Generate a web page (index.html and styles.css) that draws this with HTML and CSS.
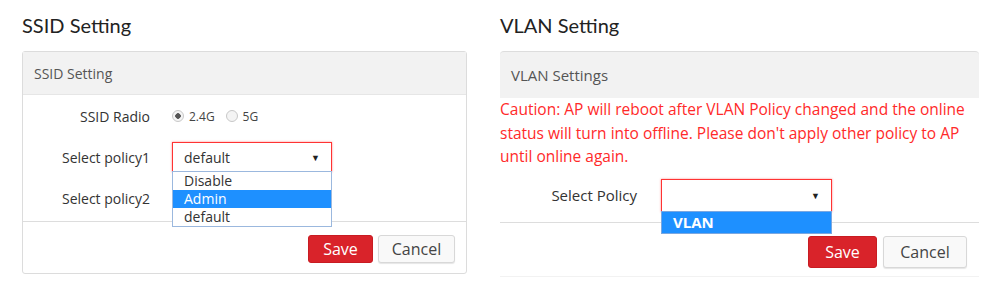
FILE: index.html
```html
<!DOCTYPE html>
<html lang="en">
<head>
  <meta charset="UTF-8">
  <title>SSID / VLAN Setting</title>
  <link rel="stylesheet" href="styles.css">
</head>
<body>

  <div class="col col-ssid">
    <h2 class="title">SSID Setting</h2>

    <div class="panel panel-ssid">
      <div class="panel-head">SSID Setting</div>

      <div class="panel-body">
        <div class="form-row">
          <label>SSID Radio</label>
          <div class="radios">
            <input type="radio" name="radio" checked><span>2.4G</span>
            <input type="radio" name="radio"><span>5G</span>
          </div>
        </div>

        <div class="form-row">
          <label>Select policy1</label>
          <div class="select">
            <span>default</span>
            <i class="arrow">&#9660;</i>
            <ul class="options">
              <li>Disable</li>
              <li class="active">Admin</li>
              <li>default</li>
            </ul>
          </div>
        </div>

        <div class="form-row">
          <label>Select policy2</label>
          <div></div>
        </div>
      </div>

      <div class="panel-foot">
        <button class="btn btn-save">Save</button>
        <button class="btn btn-cancel">Cancel</button>
      </div>
    </div>
  </div>

  <div class="col col-vlan">
    <h2 class="title">VLAN Setting</h2>

    <div class="panel panel-vlan">
      <div class="panel-head">VLAN Settings</div>

      <div class="panel-body">
        <p class="caution">Caution: AP will reboot after VLAN Policy changed and the online status will turn into offline. Please don't apply other policy to AP until online again.</p>

        <div class="form-row">
          <label>Select Policy</label>
          <div class="select">
            <span></span>
            <i class="arrow">&#9660;</i>
            <ul class="options">
              <li class="active">VLAN</li>
            </ul>
          </div>
        </div>
      </div>

      <div class="panel-foot">
        <button class="btn btn-save">Save</button>
        <button class="btn btn-cancel">Cancel</button>
      </div>
    </div>
  </div>

</body>
</html>
```

FILE: styles.css
```css
body {
  margin: 0;
  padding: 0 0 0 22px;
  display: flex;
  gap: 33px;
  font-family: 'Open Sans', 'Noto Sans', sans-serif;
  font-size: 14px;
  color: #333;
  background: #fff;
}

.col-ssid {
  width: 445px;
}

.col-vlan {
  width: 479px;
}

.title {
  margin: 13px 0 14px;
  font-family: 'Lato', sans-serif;
  font-weight: normal;
  font-size: 20px;
  line-height: 24px;
  color: #222;
}

/* panels */
.panel-ssid {
  border: 1px solid #dcdcdc;
  border-radius: 3px;
}

.panel-head {
  background: #f2f2f2;
  color: #555;
  display: flex;
  align-items: center;
  padding-left: 11px;
}

.panel-ssid .panel-head {
  height: 42px;
  border-bottom: 1px solid #e6e6e6;
}

.panel-vlan .panel-head {
  height: 46px;
  font-size: 15px;
  border-top: 1px solid #ddd;
  border-radius: 4px 4px 0 0;
}

.panel-body {
  border-bottom: 1px solid #ddd;
}

.panel-ssid .panel-body {
  padding: 6px 0 8px;
}

.panel-vlan .panel-body {
  padding-bottom: 10px;
}

.form-row {
  display: grid;
  align-items: center;
  min-height: 30px;
}

.panel-ssid .form-row {
  grid-template-columns: 127px 160px;
  column-gap: 22px;
  margin-bottom: 11px;
}

.panel-ssid .form-row:last-child {
  margin-bottom: 0;
}

.panel-vlan .form-row {
  grid-template-columns: 137px 171px;
  column-gap: 24px;
  margin-top: 10px;
  font-size: 15px;
}

.form-row label {
  text-align: right;
}

/* radios */
.radios {
  display: flex;
  align-items: center;
  font-size: 12px;
  color: #444;
}

.radios input {
  appearance: none;
  width: 12px;
  height: 12px;
  margin: 0 5px 0 0;
  border: 1px solid #c8c8c8;
  border-radius: 50%;
  background: #f4f4f4;
}

.radios input:checked {
  background: radial-gradient(circle, #555 0 2.5px, #f4f4f4 3px);
}

.radios span {
  margin-right: 11px;
}

/* fake select */
.select {
  position: relative;
  height: 30px;
  border: 1px solid #f33;
  box-shadow: 0 0 2px rgba(255, 60, 60, 0.6);
  box-sizing: border-box;
  display: flex;
  align-items: center;
  padding: 0 11px;
  font-size: 14px;
  color: #333;
}

.panel-vlan .select {
  height: 33px;
}

.arrow {
  margin-left: auto;
  font-style: normal;
  font-size: 9px;
  color: #222;
}

.options {
  position: absolute;
  top: 100%;
  left: -1px;
  right: -1px;
  margin: 0;
  padding: 0;
  list-style: none;
  background: #fff;
  border: 1px solid #9bb8de;
  z-index: 10;
}

.options li {
  height: 18px;
  line-height: 18px;
  padding-left: 11px;
  font-size: 14px;
}

.options li.active {
  background: #1e90ff;
  color: #fff;
}

.panel-vlan .options {
  border-color: #7aa7e0;
}

.panel-vlan .options li {
  height: 21px;
  line-height: 21px;
  font-weight: bold;
  font-size: 15px;
}

/* caution */
.caution {
  margin: 0;
  color: #ff2a2a;
  font-size: 15.5px;
  line-height: 23.5px;
}

/* footer & buttons */
.panel-foot {
  display: flex;
  justify-content: flex-end;
  gap: 5px;
  padding: 13px 11px 10px 0;
}

.panel-vlan .panel-foot {
  gap: 6px;
  padding: 13px 12px 8px 0;
  border-bottom: 1px solid #f2f2f2;
}

.btn {
  height: 28px;
  border-radius: 3px;
  font-family: inherit;
  font-size: 16px;
  cursor: pointer;
}

.panel-vlan .btn {
  height: 32px;
}

.btn-save {
  width: 65px;
  background: #d9232a;
  border: 1px solid #c81c22;
  color: #fff;
}

.btn-cancel {
  width: 77px;
  background: #f9f9f9;
  border: 1px solid #d8d8d8;
  color: #444;
  box-shadow: 0 1px 1px rgba(0, 0, 0, 0.1);
}

.panel-vlan .btn-save {
  width: 69px;
}

.panel-vlan .btn-cancel {
  width: 84px;
}
```
